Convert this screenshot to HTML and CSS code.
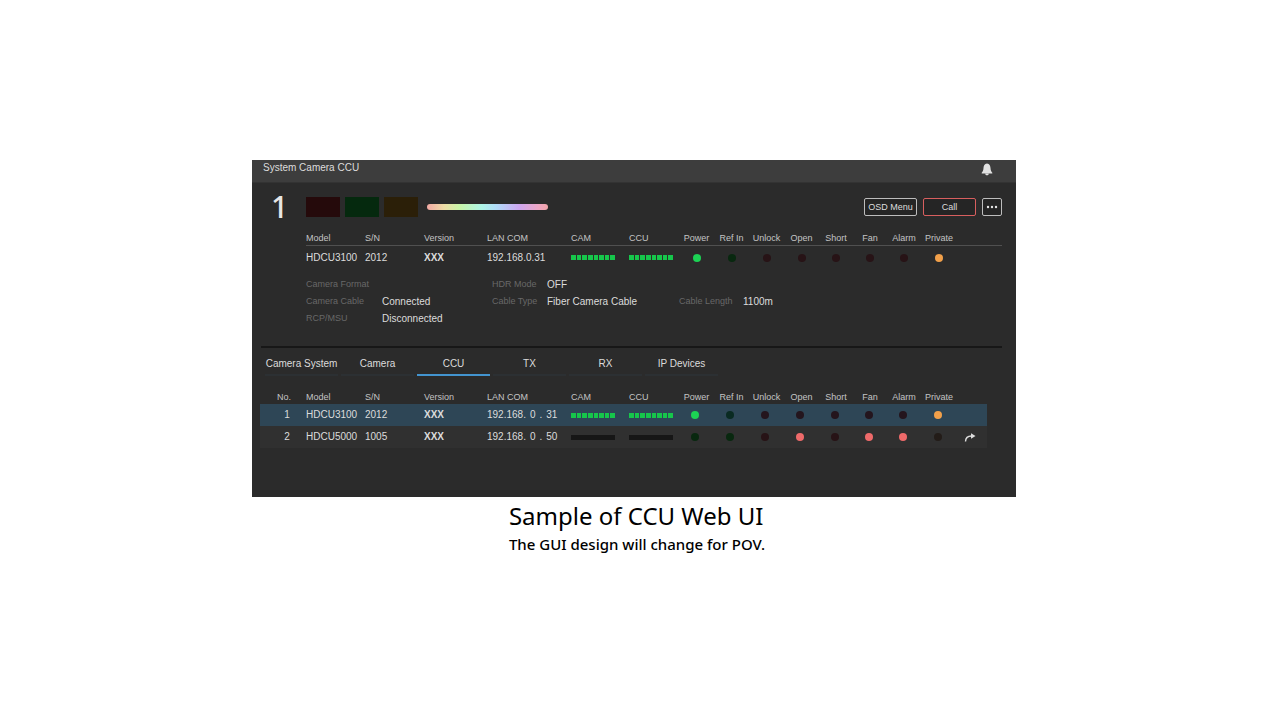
FILE: index.html
```html
<!DOCTYPE html>
<html lang="en">
<head>
<meta charset="utf-8">
<title>System Camera CCU</title>
<link rel="stylesheet" href="styles.css">
</head>
<body>
<figure class="sample">
<main class="panel">
  <header class="topbar">
    <h1 class="title">System Camera CCU</h1>
    <svg class="bell" viewBox="0 0 12 12" role="img" aria-label="Notifications"><path d="M6 0C3.500.3 2.600 2.300 2.500 4.500C2.400 7 1.800 8 .7 9.300V10H11.300V9.300C10.200 8 9.600 7 9.500 4.500C9.400 2.300 8.500.3 6 0ZM4.200 10.300C4.500 12.300 7.500 12.300 7.800 10.300Z"/></svg>
  </header>

  <section class="unit">
    <div class="unit-head">
      <span class="unit-no">1</span>
      <div class="tallies">
        <span class="tally red"></span>
        <span class="tally green"></span>
        <span class="tally amber"></span>
      </div>
      <span class="spectrum"></span>
      <div class="actions">
        <button class="btn" type="button">OSD Menu</button>
        <button class="btn call" type="button">Call</button>
        <button class="btn more" type="button" aria-label="More"><svg viewBox="0 0 12 4"><circle cx="2" cy="2" r="1.200"/><circle cx="6" cy="2" r="1.200"/><circle cx="10" cy="2" r="1.200"/></svg></button>
      </div>
    </div>

    <div class="unit-body">
      <table class="grid status">
        <colgroup><col class="c-model"><col class="c-sn"><col class="c-ver"><col class="c-lan"><col class="c-cam"><col class="c-ccu"><col class="c-led" span="4"><col class="c-led2" span="3"><col class="c-priv"><col></colgroup>
        <thead><tr><th>Model</th><th>S/N</th><th>Version</th><th>LAN COM</th><th>CAM</th><th>CCU</th><th class="l">Power</th><th class="l">Ref In</th><th class="l">Unlock</th><th class="l">Open</th><th class="l">Short</th><th class="l">Fan</th><th class="l">Alarm</th><th class="l">Private</th><th></th></tr></thead>
        <tbody><tr>
          <td>HDCU3100</td><td>2012</td><td><b>XXX</b></td><td>192.168.0.31</td>
          <td><div class="meter"><i></i><i></i><i></i><i></i><i></i><i></i><i></i><i></i></div></td>
          <td><div class="meter"><i></i><i></i><i></i><i></i><i></i><i></i><i></i><i></i></div></td>
          <td class="l"><span class="led on"></span></td><td class="l"><span class="led green-off"></span></td><td class="l"><span class="led red-off"></span></td><td class="l"><span class="led red-off"></span></td><td class="l"><span class="led red-off"></span></td><td class="l"><span class="led red-off"></span></td><td class="l"><span class="led red-off"></span></td><td class="l"><span class="led orange"></span></td><td></td>
        </tr></tbody>
      </table>

      <div class="details">
        <dl class="d-a">
          <div><dt>Camera Format</dt><dd></dd></div>
          <div><dt>Camera Cable</dt><dd>Connected</dd></div>
          <div><dt>RCP/MSU</dt><dd>Disconnected</dd></div>
        </dl>
        <dl class="d-b">
          <div><dt>HDR Mode</dt><dd>OFF</dd></div>
          <div><dt>Cable Type</dt><dd>Fiber Camera Cable</dd></div>
        </dl>
        <dl class="d-c">
          <div><dt>Cable Length</dt><dd>1100m</dd></div>
        </dl>
      </div>
    </div>
  </section>

  <nav class="tabs">
    <button class="tab" type="button">Camera System</button>
    <button class="tab" type="button">Camera</button>
    <button class="tab active" type="button" aria-current="page">CCU</button>
    <button class="tab" type="button">TX</button>
    <button class="tab" type="button">RX</button>
    <button class="tab" type="button">IP Devices</button>
  </nav>

  <section class="list">
    <table class="grid devices">
      <colgroup><col class="c-no"><col class="c-model"><col class="c-sn"><col class="c-ver"><col class="c-lan"><col class="c-cam"><col class="c-ccu"><col class="c-led" span="4"><col class="c-led2" span="3"><col class="c-priv"><col></colgroup>
      <thead><tr><th class="no">No.</th><th>Model</th><th>S/N</th><th>Version</th><th>LAN COM</th><th>CAM</th><th>CCU</th><th class="l">Power</th><th class="l">Ref In</th><th class="l">Unlock</th><th class="l">Open</th><th class="l">Short</th><th class="l">Fan</th><th class="l">Alarm</th><th class="l">Private</th><th></th></tr></thead>
      <tbody>
        <tr class="selected">
          <td class="no">1</td><td>HDCU3100</td><td>2012</td><td><b>XXX</b></td><td><div class="ip"><span>192.168.</span><span>0</span><span>.</span><span>31</span></div></td>
          <td><div class="meter"><i></i><i></i><i></i><i></i><i></i><i></i><i></i><i></i></div></td>
          <td><div class="meter"><i></i><i></i><i></i><i></i><i></i><i></i><i></i><i></i></div></td>
          <td class="l"><span class="led on"></span></td><td class="l"><span class="led green-off"></span></td><td class="l"><span class="led red-off"></span></td><td class="l"><span class="led red-off"></span></td><td class="l"><span class="led red-off"></span></td><td class="l"><span class="led red-off"></span></td><td class="l"><span class="led red-off"></span></td><td class="l"><span class="led orange"></span></td><td></td>
        </tr>
        <tr>
          <td class="no">2</td><td>HDCU5000</td><td>1005</td><td><b>XXX</b></td><td><div class="ip"><span>192.168.</span><span>0</span><span>.</span><span>50</span></div></td>
          <td><div class="meter empty"></div></td>
          <td><div class="meter empty"></div></td>
          <td class="l"><span class="led green-off"></span></td><td class="l"><span class="led green-off"></span></td><td class="l"><span class="led red-off"></span></td><td class="l"><span class="led red"></span></td><td class="l"><span class="led red-off"></span></td><td class="l"><span class="led red"></span></td><td class="l"><span class="led red"></span></td><td class="l"><span class="led orange-off"></span></td>
          <td class="go"><svg class="arrow" viewBox="0 0 12 9" role="img" aria-label="Open unit"><path d="M1.500 8.500C1.600 5 3.600 3 7.500 3" fill="none" stroke="#ddd" stroke-width="1.400"/><path d="M7 .3L11.500 3L7 5.800Z" fill="#ddd"/></svg></td>
        </tr>
      </tbody>
    </table>
  </section>
</main>
<figcaption class="caption">
  <p class="cap-main">Sample of CCU Web UI</p>
  <p class="cap-sub">The GUI design will change for POV.</p>
</figcaption>
</figure>
</body>
</html>
```
FILE: styles.css
```css
* { box-sizing: border-box; }
body {
  margin: 0;
  padding: 160px 264px 0 252px;
  background: #fff;
  font-family: "Liberation Sans", Arial, sans-serif;
}
.sample, .title, dl, dd, .caption p { margin: 0; }

.panel {
  background: #2b2b2b;
  color: #dcdcdc;
  font-size: 10px;
  line-height: 12px;
  padding-bottom: 49px;
}
.topbar {
  display: flex;
  justify-content: space-between;
  align-items: flex-start;
  height: 23px;
  padding: 2px 23px 0 11px;
  background: #3d3d3d;
  border-bottom: 1px solid #333;
}
.title { font-size: 10px; font-weight: 400; }
.bell { width: 12px; height: 13px; margin-top: 1px; fill: #e2e2e2; }

.unit {
  margin: 0 14px 0 9px;
  padding: 14px 0 19px;
  border-bottom: 2px solid #171717;
}
.unit-head { display: flex; align-items: center; height: 20px; }
.unit-no {
  width: 45px;
  padding-left: 10px;
  font: 500 30px/20px "Noto Sans", sans-serif;
  color: #e6e6e6;
}
.tallies { display: flex; gap: 5px; }
.tally { width: 34px; height: 20px; }
.tally.red { background: #250a0b; }
.tally.green { background: #05290e; }
.tally.amber { background: #2b1f08; }
.spectrum {
  width: 121px;
  height: 6px;
  margin-left: 9px;
  border-radius: 3px;
  background: linear-gradient(90deg, #f2a9a4, #eedca6 14%, #c8f5a8 27%, #aef5e6 45%, #b0dcf8 57%, #cda6f0 76%, #eda6c4 92%, #f2a5a8);
}
.actions { display: flex; gap: 6px; margin-left: auto; }
.btn {
  width: 53px;
  height: 18px;
  padding: 0;
  border: 1px solid #bdbdbd;
  border-radius: 2px;
  background: #252525;
  color: #dcdcdc;
  font: 9px/12px "Liberation Sans", Arial, sans-serif;
}
.btn.call { border-color: #d85f5f; }
.btn.more { display: grid; place-items: center; width: 20px; }
.more svg { width: 12px; height: 4px; fill: #e6e6e6; }

.unit-body { padding-left: 45px; }

.grid { width: 100%; table-layout: fixed; border-collapse: collapse; }
.grid th, .grid td {
  padding: 0;
  text-align: left;
  font-weight: 400;
  white-space: nowrap;
}
.grid th { font-size: 9px; color: #c4c4c4; }
.grid .l { text-align: center; }
.c-no { width: 46px; }
.c-model, .c-sn { width: 59px; }
.c-ver { width: 63px; }
.c-lan { width: 84px; }
.c-cam { width: 58px; }
.c-ccu { width: 50px; }
.c-led { width: 35px; }
.c-led2 { width: 34px; }
.c-priv { width: 36px; }

.status { margin-top: 14px; }
.status th { height: 14px; border-bottom: 1px solid #505050; }
.status td { height: 25px; }

.meter { display: flex; gap: 1px; width: 44px; height: 5px; }
.meter i { flex: 1; background: #16c64b; }
.meter.empty { background: #161616; }
.led { display: block; width: 8px; height: 8px; margin: 0 auto; border-radius: 50%; }
.on { background: #1cd254; }
.green-off { background: #08280f; }
.red-off { background: #271316; }
.orange { background: #f2a04a; }
.red { background: #ee6a6a; }
.orange-off { background: #231c18; }

.details { display: flex; padding-top: 6px; line-height: 17px; }
.details dl > div { display: flex; height: 17px; }
.details dt { font-size: 9px; color: #686868; white-space: nowrap; }
.details dd { white-space: nowrap; }
.d-a { width: 186px; }
.d-a dt { width: 76px; }
.d-b { width: 187px; }
.d-b dt { width: 55px; }
.d-c { padding-top: 17px; }
.d-c dt { width: 64px; }

.tabs { display: flex; gap: 3px; margin: 6px 13px 0; }
.tab {
  width: 73px;
  height: 22px;
  padding: 0;
  border: 0;
  border-bottom: 2px solid #2c3033;
  background: none;
  color: #dcdcdc;
  font: 10px/12px "Liberation Sans", Arial, sans-serif;
  white-space: nowrap;
}
.tab.active { border-bottom-color: #4394cf; }

.list { margin: 14px 29px 0 8px; }
.devices th { height: 14px; padding-bottom: 1px; }
.devices td { height: 22px; }
.devices tbody tr { background: #303030; }
.devices .selected { background: #2e4656; }
.devices .no { text-align: center; padding-left: 8px; }
.devices th.no { padding-left: 2px; }
.devices td.l { padding-right: 3px; }
.selected .green-off { background: #0a2b22; }
.selected .red-off { background: #24151d; }
.ip { display: flex; gap: 4px; }
.grid .go { padding-left: 7px; }
.arrow { display: block; width: 12px; height: 9px; }

.caption {
  width: max-content;
  margin: 0 auto;
  padding: 3px 0 0 6px;
  color: #000;
  font-family: "Noto Sans", sans-serif;
}
.cap-main { font-size: 24px; line-height: 32px; }
.cap-sub { font-size: 15px; line-height: 24px; font-weight: 500; }
```
